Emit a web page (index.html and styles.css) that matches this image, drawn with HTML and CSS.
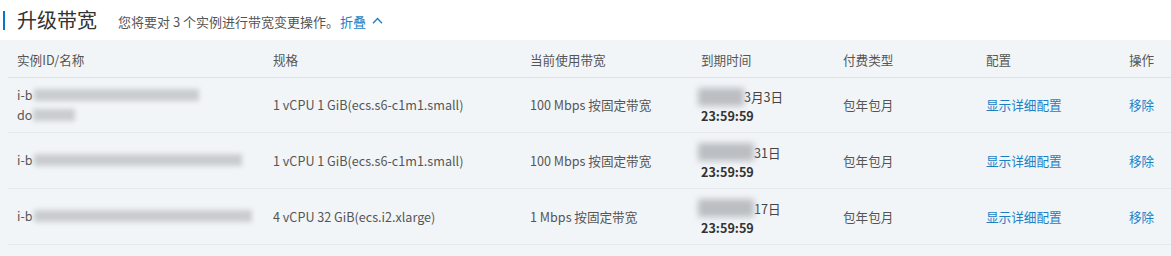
FILE: index.html
```html
<!DOCTYPE html>
<html lang="zh">
<head>
<meta charset="utf-8">
<link rel="stylesheet" href="styles.css">
</head>
<body>
<div class="head">
  <span class="bar"></span>
  <h1 class="title">升级带宽</h1>
  <span class="desc">您将要对 3 个实例进行带宽变更操作。</span>
  <a class="fold">折叠 <svg class="chev" width="11" height="7" viewBox="0 0 11 7"><path d="M1 6.2 L5.5 1.5 L10 6.2" fill="none" stroke="#1b7fc6" stroke-width="1.3"/></svg></a>
</div>
<div class="panel">
  <table class="tbl">
    <colgroup>
      <col class="c1"><col class="c2"><col class="c3"><col class="c4"><col class="c5"><col class="c6"><col class="c7">
    </colgroup>
    <thead>
      <tr><th>实例ID/名称</th><th>规格</th><th>当前使用带宽</th><th>到期时间</th><th>付费类型</th><th>配置</th><th>操作</th></tr>
    </thead>
    <tbody>
      <tr>
        <td><div class="id">i-b<span class="blur" style="width:165px"></span></div><div class="id">do<span class="blur" style="width:42px"></span></div></td>
        <td>1 vCPU 1 GiB(ecs.s6-c1m1.small)</td>
        <td>100 Mbps 按固定带宽</td>
        <td><div class="date"><div class="d1"><span class="blur dblur" style="width:46px"></span>3月3日</div><div class="d2">23:59:59</div></div></td>
        <td>包年包月</td>
        <td><a class="lnk">显示详细配置</a></td>
        <td><a class="lnk">移除</a></td>
      </tr>
      <tr>
        <td><div class="id">i-b<span class="blur" style="width:208px"></span></div></td>
        <td>1 vCPU 1 GiB(ecs.s6-c1m1.small)</td>
        <td>100 Mbps 按固定带宽</td>
        <td><div class="date"><div class="d1"><span class="blur dblur" style="width:56px"></span>31日</div><div class="d2">23:59:59</div></div></td>
        <td>包年包月</td>
        <td><a class="lnk">显示详细配置</a></td>
        <td><a class="lnk">移除</a></td>
      </tr>
      <tr>
        <td><div class="id">i-b<span class="blur" style="width:218px"></span></div></td>
        <td>4 vCPU 32 GiB(ecs.i2.xlarge)</td>
        <td>1 Mbps 按固定带宽</td>
        <td><div class="date"><div class="d1"><span class="blur dblur" style="width:56px"></span>17日</div><div class="d2">23:59:59</div></div></td>
        <td>包年包月</td>
        <td><a class="lnk">显示详细配置</a></td>
        <td><a class="lnk">移除</a></td>
      </tr>
    </tbody>
  </table>
</div>
</body>
</html>
```
FILE: styles.css
```css
* { box-sizing: border-box; }
html, body { margin: 0; padding: 0; background: #f2f5f8; }
body {
  font-family: "Microsoft YaHei", "Noto Sans CJK SC", "Noto Sans", sans-serif;
  font-size: 12.6px;
  color: #555;
  width: 1171px;
  height: 256px;
  overflow: hidden;
}
.head {
  background: #fff;
  height: 40px;
  display: flex;
  align-items: center;
  padding-left: 3px;
}
.bar {
  width: 2px;
  height: 19px;
  background: #0a74c6;
  margin-right: 12px;
}
.title {
  margin: 0;
  font-size: 20px;
  font-weight: normal;
  color: #333;
  line-height: 24px;
  margin-right: 21px;
}
.desc { color: #555; font-size: 13px; margin-right: 1px; padding-top: 2px; }
.fold { color: #1b7fc6; font-size: 13px; display: flex; align-items: center; padding-top: 2px; }
.chev { margin-left: 6px; margin-bottom: 2px; }
.panel { padding-left: 8px; }
.tbl { border-collapse: collapse; table-layout: fixed; width: 1170px; }
.c1 { width: 256px; } .c2 { width: 257px; } .c3 { width: 171px; } .c4 { width: 142px; }
.c5 { width: 143px; } .c6 { width: 143px; } .c7 { width: 58px; }
.tbl th {
  text-align: left;
  font-weight: normal;
  color: #555;
  height: 37px;
  padding: 2px 0 0 9px;
  border-bottom: 1px solid #dde2e7;
  white-space: nowrap;
}
.tbl td {
  height: 56px;
  padding: 0 0 0 9px;
  border-bottom: 1px solid #e6eaee;
  white-space: nowrap;
  color: #555;
  vertical-align: middle;
}
.tbl tbody tr:first-child td { height: 55px; }
.id { line-height: 20px; display: flex; align-items: center; }
.blur {
  display: inline-block;
  height: 12px;
  background: #c9ccd0;
  filter: blur(2.5px);
  margin-left: 1px;
}
.date { padding-top: 3px; }
.d1 { display: flex; align-items: center; line-height: 19px; color: #444; margin-left: -4px; }
.dblur { height: 18px; background: #bbbec2; filter: blur(3px); margin-right: 0; }
.d2 { font-weight: bold; color: #333; line-height: 19px; }
.lnk { color: #1b7fc6; }
```
